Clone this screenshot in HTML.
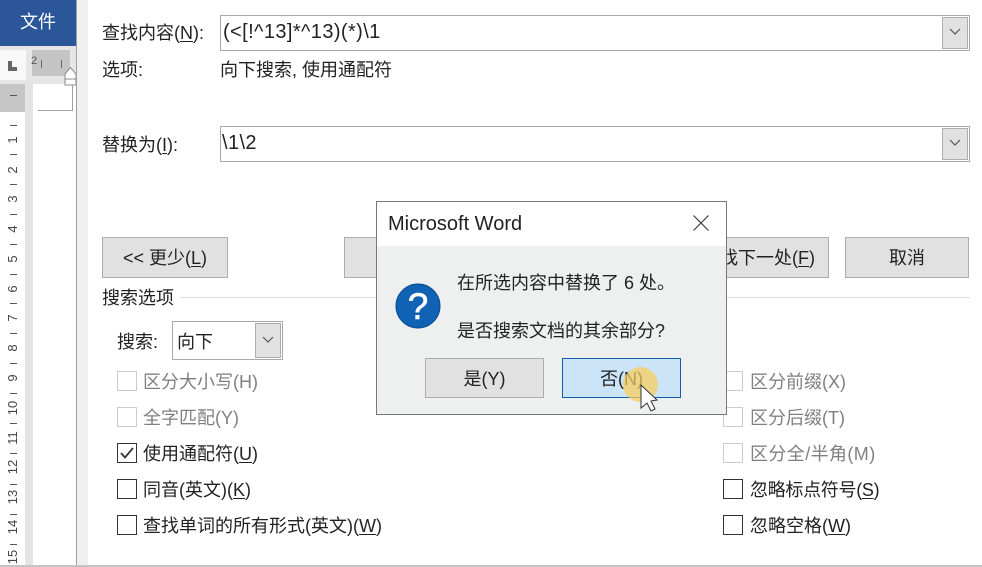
<!DOCTYPE html>
<html lang="zh"><head><meta charset="utf-8"><style>
html,body{margin:0;padding:0}
body{width:982px;height:567px;position:relative;overflow:hidden;background:#fff;font-family:"Liberation Sans","Noto Sans CJK SC",sans-serif;font-size:18px;color:#222}
.a{position:absolute;box-sizing:border-box}
.t{position:absolute;white-space:nowrap;line-height:24px;height:24px}
u{text-underline-offset:2px}
.btn{position:absolute;box-sizing:border-box;background:#e1e1e1;border:1px solid #adadad;text-align:center;white-space:nowrap}
.cb{position:absolute;box-sizing:border-box;width:20px;height:20px;border:1px solid #333;background:#fff}
.cb.d{border-color:#ccc}
.d2{color:#808080}
.n{position:absolute;left:3px;width:20px;text-align:center;font-size:13px;line-height:14px;height:14px;transform:rotate(-90deg);color:#444}
.k{position:absolute;left:10px;width:7px;height:1px;background:#555}
.input{position:absolute;box-sizing:border-box;background:#fff;border:1px solid #a9a9a9}
.dd{position:absolute;box-sizing:border-box;background:#e1e1e1;border:1px solid #adadad}
.v{font-size:20px;letter-spacing:.4px}
</style></head><body>

<!-- left app strip -->
<div class="a" style="left:0;top:0;width:76px;height:46px;background:#2b579a"></div>
<div class="t" style="left:20px;top:10px;color:#fff;font-size:18px">文件</div>
<div class="a" style="left:0;top:46px;width:76px;height:521px;background:#fff"></div>
<div class="a" style="left:0;top:46px;width:76px;height:38px;background:#e6e6e6"></div>
<div class="a" style="left:0;top:50px;width:26px;height:30px;background:#f8f8f8"></div>
<div class="a" style="left:8px;top:61px;width:4px;height:10px;background:#666"></div>
<div class="a" style="left:8px;top:67px;width:9px;height:4px;background:#666"></div>
<div class="a" style="left:32px;top:50px;width:38px;height:26px;background:#c4c4c4"></div>
<div class="t" style="left:31px;top:54px;font-size:11px;line-height:14px;height:14px;color:#555">2</div>
<div class="a" style="left:41px;top:60px;width:1px;height:8px;background:#666"></div>
<div class="a" style="left:61px;top:60px;width:1px;height:8px;background:#666"></div>
<svg class="a" style="left:64px;top:66px" width="13" height="20"><path d="M1 8 L6.5 1.5 L12 8 V13 H1 Z M1 13 V19 H12 V13" fill="#fff" stroke="#8a8a8a"/></svg>
<div class="a" style="left:0;top:84px;width:25px;height:28px;background:#c6c6c6"></div>
<div class="a" style="left:25px;top:80px;width:8px;height:487px;background:#e4e4e4"></div>
<div class="a" style="left:38px;top:110px;width:35px;height:1px;background:#a0a0a0"></div>
<div class="a" style="left:72px;top:85px;width:1px;height:26px;background:#a0a0a0"></div>
<div class="k" style="top:95px"></div>
<div class="k" style="top:125px"></div><div class="n" style="top:133px">1</div>
<div class="k" style="top:154px"></div><div class="n" style="top:163px">2</div>
<div class="k" style="top:184px"></div><div class="n" style="top:192px">3</div>
<div class="k" style="top:214px"></div><div class="n" style="top:222px">4</div>
<div class="k" style="top:244px"></div><div class="n" style="top:252px">5</div>
<div class="k" style="top:274px"></div><div class="n" style="top:282px">6</div>
<div class="k" style="top:303px"></div><div class="n" style="top:311px">7</div>
<div class="k" style="top:333px"></div><div class="n" style="top:341px">8</div>
<div class="k" style="top:363px"></div><div class="n" style="top:371px">9</div>
<div class="k" style="top:393px"></div><div class="n" style="top:401px">10</div>
<div class="k" style="top:423px"></div><div class="n" style="top:431px">11</div>
<div class="k" style="top:453px"></div><div class="n" style="top:460px">12</div>
<div class="k" style="top:484px"></div><div class="n" style="top:490px">13</div>
<div class="k" style="top:514px"></div><div class="n" style="top:520px">14</div>
<div class="k" style="top:544px"></div><div class="n" style="top:550px">15</div>
<div class="a" style="left:76px;top:0;width:1px;height:567px;background:#a0a0a0"></div>
<div class="a" style="left:77px;top:0;width:11px;height:567px;background:#f0f0f0"></div>
<div class="a" style="left:0;top:565px;width:982px;height:2px;background:#c4c4c4"></div>

<!-- find row -->
<div class="t" style="left:102px;top:21px">查找内容(<u>N</u>):</div>
<div class="input" style="left:220px;top:15px;width:750px;height:36px"></div>
<div class="t v" style="left:223px;top:20px">(&lt;[!^13]*^13)(*)\1</div>
<div class="dd" style="left:942px;top:17px;width:26px;height:32px"></div>
<svg class="a" style="left:949px;top:28px" width="12" height="8"><path d="M1 1 L6 6 L11 1" fill="none" stroke="#555" stroke-width="1.2"/></svg>
<div class="t" style="left:102px;top:58px">选项:</div>
<div class="t" style="left:220px;top:58px">向下搜索, 使用通配符</div>

<!-- replace row -->
<div class="t" style="left:102px;top:133px">替换为(<u>I</u>):</div>
<div class="input" style="left:220px;top:126px;width:750px;height:36px"></div>
<div class="t v" style="left:222px;top:131px">\1\2</div>
<div class="dd" style="left:942px;top:128px;width:26px;height:32px"></div>
<svg class="a" style="left:949px;top:139px" width="12" height="8"><path d="M1 1 L6 6 L11 1" fill="none" stroke="#555" stroke-width="1.2"/></svg>

<!-- buttons -->
<div class="btn" style="left:102px;top:237px;width:126px;height:41px;line-height:41px">&lt;&lt; 更少(<u>L</u>)</div>
<div class="btn" style="left:344px;top:237px;width:40px;height:41px"></div>
<div class="btn" style="left:700px;top:237px;width:129px;height:41px;line-height:41px;text-align:left;padding-left:1px">查找下一处(<u>F</u>)</div>
<div class="btn" style="left:845px;top:237px;width:124px;height:41px;line-height:41px">取消</div>

<!-- search options -->
<div class="t" style="left:102px;top:286px">搜索选项</div>
<div class="a" style="left:180px;top:297px;width:790px;height:1px;background:#dcdcdc"></div>
<div class="t" style="left:117px;top:330px">搜索:</div>
<div class="input" style="left:172px;top:321px;width:111px;height:39px"></div>
<div class="t" style="left:177px;top:330px">向下</div>
<div class="dd" style="left:255px;top:323px;width:26px;height:35px"></div>
<svg class="a" style="left:262px;top:336px" width="12" height="8"><path d="M1 1 L6 6 L11 1" fill="none" stroke="#555" stroke-width="1.2"/></svg>

<div class="cb d" style="left:117px;top:371px"></div><div class="t d2" style="left:143px;top:370px">区分大小写(H)</div>
<div class="cb d" style="left:117px;top:407px"></div><div class="t d2" style="left:143px;top:406px">全字匹配(Y)</div>
<div class="cb" style="left:117px;top:443px"></div>
<svg class="a" style="left:117px;top:443px" width="20" height="20"><path d="M4 10 L8 14.5 L16 5" fill="none" stroke="#333" stroke-width="1.8"/></svg>
<div class="t" style="left:143px;top:442px">使用通配符(<u>U</u>)</div>
<div class="cb" style="left:117px;top:479px"></div><div class="t" style="left:143px;top:478px">同音(英文)(<u>K</u>)</div>
<div class="cb" style="left:117px;top:515px"></div><div class="t" style="left:143px;top:514px">查找单词的所有形式(英文)(<u>W</u>)</div>

<div class="cb d" style="left:723px;top:371px"></div><div class="t d2" style="left:750px;top:370px">区分前缀(X)</div>
<div class="cb d" style="left:723px;top:407px"></div><div class="t d2" style="left:750px;top:406px">区分后缀(T)</div>
<div class="cb d" style="left:723px;top:443px"></div><div class="t d2" style="left:750px;top:442px;letter-spacing:.4px">区分全/半角(M)</div>
<div class="cb" style="left:723px;top:479px"></div><div class="t" style="left:750px;top:478px;letter-spacing:-.3px">忽略标点符号(<u>S</u>)</div>
<div class="cb" style="left:723px;top:515px"></div><div class="t" style="left:750px;top:514px">忽略空格(<u>W</u>)</div>

<!-- message box -->
<div class="a" style="left:376px;top:201px;width:351px;height:214px;background:#eef0f0;border:1px solid #777"></div>
<div class="a" style="left:377px;top:202px;width:349px;height:44px;background:#fff"></div>
<div class="t" style="left:388px;top:212px;font-size:20px;color:#222">Microsoft Word</div>
<svg class="a" style="left:692px;top:214px" width="18" height="18"><path d="M1.5 1.5 L16.5 16.5 M16.5 1.5 L1.5 16.5" stroke="#333" stroke-width="1.1" fill="none"/></svg>
<svg class="a" style="left:395px;top:283px" width="46" height="46">
<circle cx="23" cy="23" r="22" fill="#0f62b4" stroke="#0b4a8e" stroke-width="1"/>
<text x="23" y="36" text-anchor="middle" font-family="Liberation Sans" font-size="37" stroke="#fff" stroke-width=".6" fill="#fff">?</text>
</svg>
<div class="t" style="left:457px;top:271px">在所选内容中替换了 6 处。</div>
<div class="t" style="left:457px;top:319px">是否搜索文档的其余部分?</div>
<div class="btn" style="left:425px;top:358px;width:119px;height:40px;line-height:41px">是(Y)</div>
<div class="btn" style="left:562px;top:358px;width:119px;height:40px;line-height:41px;background:#cce4f7;border-color:#0f5ea8">否(N)</div>

<!-- cursor highlight -->
<div class="a" style="left:623px;top:367px;width:35px;height:35px;border-radius:50%;background:rgba(248,205,90,.72)"></div>
<svg class="a" style="left:638px;top:382px" width="22" height="32"><path d="M3 3 L19 18 L13 19 L17 27 L13 29 L9 21 L3 26 Z" fill="#fff" stroke="#333" stroke-width="1"/></svg>
</body></html>
